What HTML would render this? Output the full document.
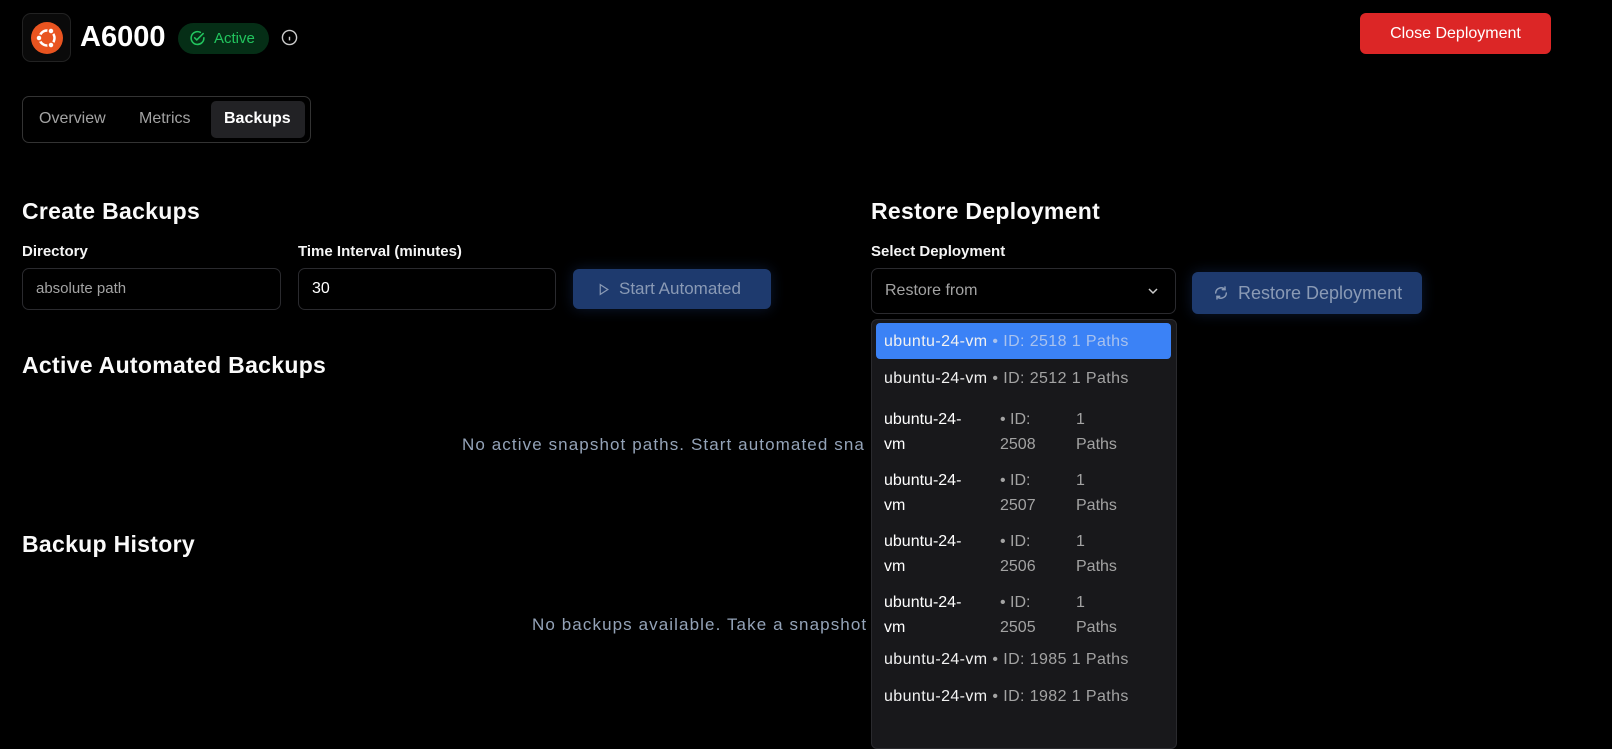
<!DOCTYPE html>
<html><head><meta charset="utf-8"><style>
*{box-sizing:border-box;margin:0;padding:0}
body{width:1612px;height:737px;background:#000;color:#fff;font-family:"Liberation Sans",sans-serif;position:relative;overflow:hidden}
.a{position:absolute}
.h2{font-size:23px;font-weight:600;color:#fafafa;letter-spacing:0.3px}
.lbl{font-size:15px;font-weight:600;color:#f5f5f5}
.inp{border:1px solid #2a2a2e;border-radius:7px;height:42px;font-size:16px;padding:0 13px;line-height:40px}
.muted{color:#94a3b8;font-size:17px;letter-spacing:1.1px}
.row{position:absolute;left:876px;width:295px;font-size:16px;color:#f1f1f1;letter-spacing:0.4px;white-space:nowrap}
.g{color:#a3a3a3}
</style></head><body>
<div class="a" style="left:22px;top:13px;width:49px;height:49px;border:1px solid #222;border-radius:9px;background:#0a0a0a"></div>
<svg class="a" style="left:30px;top:21px" width="34" height="34" viewBox="0 0 34 34"><circle cx="17" cy="17" r="16" fill="#e95420"/><circle cx="17" cy="17" r="7.5" fill="none" stroke="#fff" stroke-width="2.5"/><circle cx="9" cy="17" r="3" fill="#fff" stroke="#e95420" stroke-width="1.5"/><circle cx="21" cy="10" r="3" fill="#fff" stroke="#e95420" stroke-width="1.5"/><circle cx="21" cy="24" r="3" fill="#fff" stroke="#e95420" stroke-width="1.5"/></svg>
<div class="a" style="left:80px;top:21px;font-size:29px;font-weight:600">A6000</div>
<div class="a" style="left:178px;top:23px;width:91px;height:31px;border-radius:16px;background:#052e16;color:#22c55e;font-size:15px;line-height:31px;padding-left:36px">Active</div>
<svg class="a" style="left:189px;top:30px" width="17" height="17" viewBox="0 0 24 24" fill="none" stroke="#22c55e" stroke-width="2.2" stroke-linecap="round"><path d="M21 11a9 9 0 1 1-5-7.7"/><path d="M8 11l3 3 9-9"/></svg>
<svg class="a" style="left:281px;top:29px" width="17" height="17" viewBox="0 0 24 24" fill="none" stroke="#ccc" stroke-width="2"><circle cx="12" cy="12" r="10"/><path d="M12 16v-5M12 8h.01"/></svg>
<div class="a" style="left:1360px;top:13px;width:191px;height:41px;background:#dc2626;border-radius:6px;font-size:16px;font-weight:500;text-align:center;line-height:41px">Close Deployment</div>
<div class="a" style="left:22px;top:96px;width:289px;height:47px;border:1px solid #333;border-radius:7px"></div>
<div class="a" style="left:211px;top:101px;width:94px;height:37px;background:#222225;border-radius:5px"></div>
<div class="a" style="left:39px;top:110px;font-size:16px;color:#a3a3a3">Overview</div>
<div class="a" style="left:139px;top:110px;font-size:16px;color:#a3a3a3">Metrics</div>
<div class="a" style="left:224px;top:110px;font-size:16px;font-weight:600">Backups</div>
<div class="a h2" style="left:22px;top:198px">Create Backups</div>
<div class="a lbl" style="left:22px;top:243px">Directory</div>
<div class="a lbl" style="left:298px;top:243px">Time Interval (minutes)</div>
<div class="a inp" style="left:22px;top:268px;width:259px;color:#a3a3a3;font-size:15px">absolute path</div>
<div class="a inp" style="left:298px;top:268px;width:258px;color:#fff">30</div>
<div class="a" style="left:573px;top:269px;width:198px;height:40px;background:#1e3a6e;border-radius:6px;color:#8a9ab5;font-size:17px;line-height:40px;padding-left:46px;box-shadow:0 0 14px rgba(40,80,160,.3)">Start Automated</div>
<svg class="a" style="left:597px;top:283px" width="13" height="13" viewBox="0 0 24 24" fill="none" stroke="#8a9ab5" stroke-width="2.2"><path d="M6 3l14 9-14 9z"/></svg>
<div class="a h2" style="left:22px;top:352px">Active Automated Backups</div>
<div class="a muted" style="left:462px;top:435px">No active snapshot paths. Start automated sna</div>
<div class="a h2" style="left:22px;top:531px">Backup History</div>
<div class="a muted" style="left:532px;top:615px">No backups available. Take a snapshot</div>
<div class="a h2" style="left:871px;top:198px">Restore Deployment</div>
<div class="a lbl" style="left:871px;top:243px">Select Deployment</div>
<div class="a inp" style="left:871px;top:268px;width:305px;color:#a3a3a3;height:46px;line-height:44px">Restore from</div>
<svg class="a" style="left:1147px;top:286px" width="12" height="10" viewBox="0 0 12 10" fill="none" stroke="#ccc" stroke-width="1.5"><path d="M2 3l4 4 4-4"/></svg>
<div class="a" style="left:1192px;top:272px;width:230px;height:42px;background:#1e3a6e;border-radius:6px;color:#8a9ab5;font-size:18px;line-height:42px;padding-left:46px;box-shadow:0 0 14px rgba(40,80,160,.3)">Restore Deployment</div>
<svg class="a" style="left:1213px;top:285px" width="16" height="16" viewBox="0 0 24 24" fill="none" stroke="#8a9ab5" stroke-width="2.2" stroke-linecap="round"><path d="M20 12a8 8 0 0 1-14 5M4 12a8 8 0 0 1 14-5"/><path d="M18 3v4h-4M6 21v-4h4"/></svg>
<div class="a" style="left:871px;top:319px;width:306px;height:430px;background:#18181b;border:1px solid #2a2a2e;border-radius:6px"></div>
<div class="a" style="left:876px;top:323px;width:295px;height:36px;background:#3b82f6;border-radius:4px"></div>
<div class="row" style="top:333px;padding-left:8px">ubuntu-24-vm <span class="g" style="color:#a9c2ee">• ID: 2518 1 Paths</span></div>
<div class="row" style="top:370px;padding-left:8px">ubuntu-24-vm <span class="g">• ID: 2512 1 Paths</span></div>
<div class="row" style="top:651px;padding-left:8px">ubuntu-24-vm <span class="g">• ID: 1985 1 Paths</span></div>
<div class="row" style="top:688px;padding-left:8px">ubuntu-24-vm <span class="g">• ID: 1982 1 Paths</span></div>
<div class="a" style="left:884px;top:407px;font-size:16px;line-height:25px">ubuntu-24-<br>vm</div>
<div class="a g" style="left:1000px;top:407px;font-size:16px;line-height:25px">• ID:<br>2508</div>
<div class="a g" style="left:1076px;top:407px;font-size:16px;line-height:25px">1<br>Paths</div>
<div class="a" style="left:884px;top:468px;font-size:16px;line-height:25px">ubuntu-24-<br>vm</div>
<div class="a g" style="left:1000px;top:468px;font-size:16px;line-height:25px">• ID:<br>2507</div>
<div class="a g" style="left:1076px;top:468px;font-size:16px;line-height:25px">1<br>Paths</div>
<div class="a" style="left:884px;top:529px;font-size:16px;line-height:25px">ubuntu-24-<br>vm</div>
<div class="a g" style="left:1000px;top:529px;font-size:16px;line-height:25px">• ID:<br>2506</div>
<div class="a g" style="left:1076px;top:529px;font-size:16px;line-height:25px">1<br>Paths</div>
<div class="a" style="left:884px;top:590px;font-size:16px;line-height:25px">ubuntu-24-<br>vm</div>
<div class="a g" style="left:1000px;top:590px;font-size:16px;line-height:25px">• ID:<br>2505</div>
<div class="a g" style="left:1076px;top:590px;font-size:16px;line-height:25px">1<br>Paths</div>
</body></html>
